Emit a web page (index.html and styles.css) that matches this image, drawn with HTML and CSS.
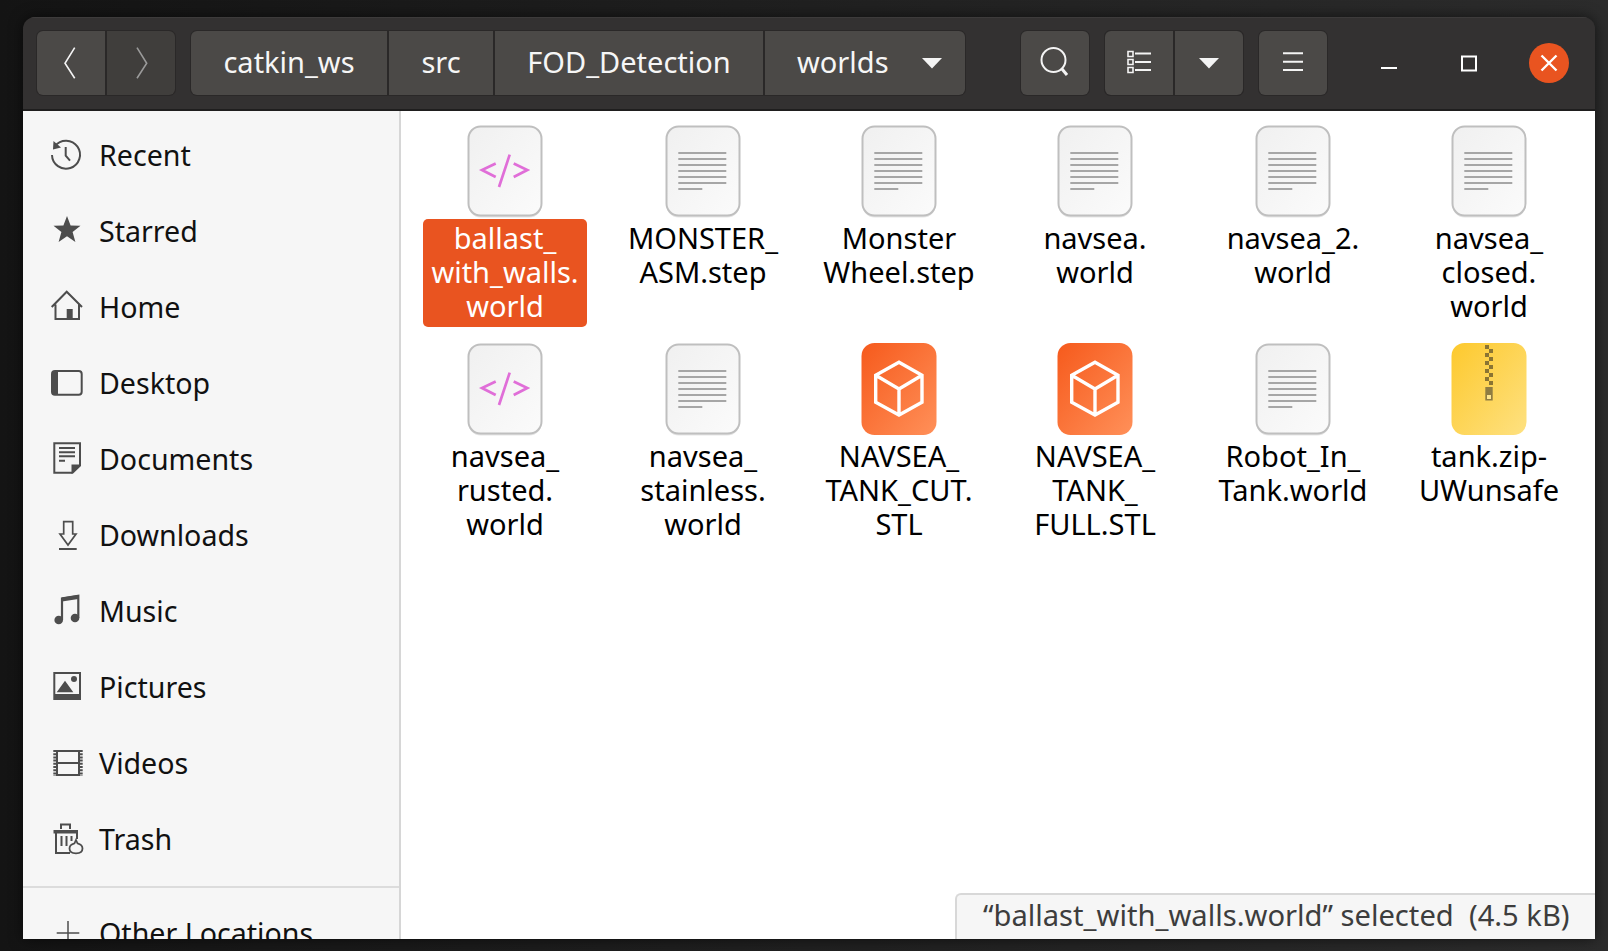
FILE: index.html
```html
<!DOCTYPE html>
<html lang="en">
<head>
<meta charset="utf-8">
<title>worlds</title>
<link rel="stylesheet" href="styles.css">
</head>
<body>
<svg class="defs" width="0" height="0" aria-hidden="true">
  <defs>
    <linearGradient id="paper" x1="0" y1="0" x2="1" y2="1"><stop offset="0" stop-color="#f0f0f0"/><stop offset="1" stop-color="#fbfbfb"/></linearGradient>
    <linearGradient id="orange" x1="0" y1="0" x2="1" y2="1"><stop offset="0" stop-color="#f65a1c"/><stop offset="1" stop-color="#ff9059"/></linearGradient>
    <linearGradient id="yellow" x1="0" y1="0" x2="1" y2="1"><stop offset="0" stop-color="#fdc92d"/><stop offset="1" stop-color="#fee181"/></linearGradient>
    <symbol id="sheet" viewBox="0 0 76 94">
      <rect x="1.5" y="2.5" width="73" height="90" rx="12" fill="#000" opacity=".1"/>
      <rect x="1.5" y="1.5" width="73" height="89" rx="12" fill="url(#paper)" stroke="#bfbfbf" stroke-width="2"/>
    </symbol>
    <symbol id="doc" viewBox="0 0 76 94">
      <use href="#sheet" width="76" height="94"/>
      <path d="M13.3 28H61.3M13.3 34H61.3M13.3 40H61.3M13.3 46H61.3M13.3 52H61.3M13.3 58H61.3M13.3 64H37.3" stroke="#a6a6a6" stroke-width="2" fill="none"/>
    </symbol>
    <symbol id="code" viewBox="0 0 76 94">
      <use href="#sheet" width="76" height="94"/>
      <path d="M28.7 38.5L15 45L28.7 52M42.7 29.7L32 62M46.7 38.500L60.300 45L46.7 52" stroke="#e06ed8" stroke-width="2.7" fill="none"/>
    </symbol>
    <symbol id="cube" viewBox="0 0 76 94">
      <rect x="0.5" y="0" width="75" height="92" rx="13" fill="url(#orange)"/>
      <path d="M38 19.3L61 32.3V59.3L38 72L14.7 59.3V32.3ZM14.7 32.3L38 46L61 32.3M38 46V72" stroke="#fff" stroke-width="3.4" fill="none"/>
    </symbol>
  </defs>
</svg>
<div class="window">
  <header class="header">
    <div class="nav group">
      <button class="btn nav-btn"><svg class="hicon" viewBox="0 0 68 64"><path d="M37.7 16.7L28 32.3L37.7 47.3" stroke="#f4f4f4" stroke-width="1.6" fill="none"/></svg></button>
      <button class="btn nav-btn off"><svg class="hicon" viewBox="0 0 68 64"><path d="M30 16.7L39.7 32.3L30 47.3" stroke="#9a9a9a" stroke-width="1.6" fill="none"/></svg></button>
    </div>
    <div class="path group">
      <button class="btn crumb c1">catkin_ws</button>
      <button class="btn crumb c2">src</button>
      <button class="btn crumb c3">FOD_Detection</button>
      <button class="btn crumb c4"><span>worlds</span><svg class="arrow" viewBox="0 0 20 11"><path d="M0 0H20L10 10.5Z" fill="#f4f4f4"/></svg></button>
    </div>
    <button class="btn tool search"><svg class="hicon" viewBox="0 0 68 64"><circle cx="32.5" cy="29" r="12" stroke="#f4f4f4" stroke-width="2" fill="none"/><path d="M41 38L46 44" stroke="#f4f4f4" stroke-width="3"/></svg></button>
    <div class="group views">
      <button class="btn tool"><svg class="hicon" viewBox="0 0 68 64"><path d="M23 20.5h5v5h-5zM23 28.5h5v5h-5zM23 36.5h5v5h-5z" stroke="#f4f4f4" stroke-width="1.6" fill="none"/><path d="M30 22.5H46M30 31H46M30 39H46" stroke="#f4f4f4" stroke-width="2"/></svg></button>
      <button class="btn tool"><svg class="arrow" viewBox="0 0 20 11"><path d="M0 0H20L10 10.5Z" fill="#f4f4f4"/></svg></button>
    </div>
    <button class="btn tool"><svg class="hicon" viewBox="0 0 68 64"><path d="M24 22.3H44M24 30.7H44M24 39H44" stroke="#f4f4f4" stroke-width="2"/></svg></button>
    <div class="wm">
      <div class="wm-btn"><svg class="wm-icon" viewBox="0 0 40 40"><path d="M12 25H28" stroke="#fff" stroke-width="2"/></svg></div>
      <div class="wm-btn"><svg class="wm-icon" viewBox="0 0 40 40"><rect x="13" y="13.5" width="14" height="14" stroke="#fff" stroke-width="2" fill="none"/></svg></div>
      <div class="wm-btn close"><svg class="wm-icon" viewBox="0 0 40 40"><path d="M12.5 12.5L27.5 27.5M27.5 12.5L12.5 27.5" stroke="#fff" stroke-width="2.4"/></svg></div>
    </div>
  </header>
  <div class="body">
    <nav class="sidebar">
      <div class="row"><svg class="sicon" viewBox="0 0 32 32"><path d="M5 7A14 14 0 1 1 2 16" stroke="#4d4d4d" stroke-width="2" fill="none"/><path d="M3.5 2L11 8.5L3 10.5Z" fill="#4d4d4d"/><path d="M15.7 8V16.7L20 21.7" stroke="#4d4d4d" stroke-width="2" fill="none"/></svg>Recent</div>
      <div class="row"><svg class="sicon" viewBox="0 0 32 32"><path d="M17 1L20.6 10.5L30.5 10.8L22.6 17L25.4 27L17 21.2L8.6 27L11.4 17L3.5 10.8L13.4 10.5Z" fill="#4d4d4d"/></svg>Starred</div>
      <div class="row"><svg class="sicon" viewBox="0 0 32 32"><path d="M1.7 16L16.7 .7L32 16M5.5 13.5V28H29V13.5" stroke="#4d4d4d" stroke-width="2" fill="none"/><path d="M16.7 18H22.7V28H16.7Z" fill="#4d4d4d"/></svg>Home</div>
      <div class="row"><svg class="sicon" viewBox="0 0 32 32"><rect x="2" y="4" width="29.7" height="23.7" rx="3" stroke="#4d4d4d" stroke-width="2" fill="none"/><path d="M4 4H8V28H4Q2 28 2 25V7Q2 4 4 4Z" fill="#4d4d4d"/></svg>Desktop</div>
      <div class="row"><svg class="sicon" viewBox="0 0 32 32"><path d="M4.3 .3H30V22.5L22.5 29.7H4.3Z" stroke="#4d4d4d" stroke-width="2" fill="none"/><path d="M31 21.5H21.5V31Z" fill="#4d4d4d"/><path d="M9 5H25M9 9.3H25M9 13.3H25M9 17.7H15" stroke="#4d4d4d" stroke-width="2"/></svg>Documents</div>
      <div class="row"><svg class="sicon" viewBox="0 0 32 32"><path d="M13.7 2.7H22.7V15H26L18 26L10 15H13.7Z" stroke="#4d4d4d" stroke-width="1.7" fill="none"/><path d="M9 30H26.7" stroke="#4d4d4d" stroke-width="2"/></svg>Downloads</div>
      <div class="row"><svg class="sicon" viewBox="0 0 32 32"><circle cx="8.7" cy="25" r="4.3" fill="#4d4d4d"/><circle cx="25" cy="23" r="4.3" fill="#4d4d4d"/><path d="M12 25V3.5L28.3 .8V23" stroke="#4d4d4d" stroke-width="2.2" fill="none"/><path d="M12 2.5L28.3 0V4L12 6.5Z" fill="#4d4d4d"/></svg>Music</div>
      <div class="row"><svg class="sicon" viewBox="0 0 32 32"><path d="M4.3 2H30V28H4.3Z" stroke="#4d4d4d" stroke-width="2" fill="none"/><path d="M4 23H30V29H4ZM6.7 21.3L15 9.7L23.3 21.3Z" fill="#4d4d4d"/><circle cx="24" cy="8" r="3" fill="#4d4d4d"/></svg>Pictures</div>
      <div class="row"><svg class="sicon" viewBox="0 0 32 32"><path d="M7 4H29V28H7ZM7 16H29" stroke="#4d4d4d" stroke-width="2" fill="none"/><path d="M5 3V29M31 3V29" stroke="#4d4d4d" stroke-width="3.4" stroke-dasharray="2 1.2" fill="none"/></svg>Videos</div>
      <div class="row"><svg class="sicon" viewBox="0 0 32 32"><path d="M3.5 7H28V10.5H3.5Z" fill="#4d4d4d"/><path d="M11 6V1.5H20V6" stroke="#4d4d4d" stroke-width="2" fill="none"/><path d="M6 10V30H20M27 10V16" stroke="#4d4d4d" stroke-width="2" fill="none"/><path d="M11.5 13V23M16.5 13V23M21.5 13V18" stroke="#4d4d4d" stroke-width="2"/><path d="M26 17L27.500 20.300C30.500 21 32.500 23 32.500 25.500C32.500 28.500 30 30.300 26 30.300C22 30.300 19.500 28.500 19.500 25.500C19.500 23 21.500 21 24.500 20.300Z" stroke="#4d4d4d" stroke-width="1.800" fill="#f6f6f6"/></svg>Trash</div>
      <div class="sep"></div>
      <div class="row"><svg class="sicon" viewBox="0 0 32 32"><path d="M18 4V28M6.700 16H29.300" stroke="#4d4d4d" stroke-width="1.500"/></svg>Other Locations</div>
    </nav>
    <main class="main">
      <div class="grid">
        <div class="item"><svg class="ficon"><use href="#code"/></svg><div class="label selected">ballast_<br>with_walls.<br>world</div></div>
        <div class="item"><svg class="ficon"><use href="#doc"/></svg><div class="label">MONSTER_<br>ASM.step</div></div>
        <div class="item"><svg class="ficon"><use href="#doc"/></svg><div class="label">Monster<br>Wheel.step</div></div>
        <div class="item"><svg class="ficon"><use href="#doc"/></svg><div class="label">navsea.<br>world</div></div>
        <div class="item"><svg class="ficon"><use href="#doc"/></svg><div class="label">navsea_2.<br>world</div></div>
        <div class="item"><svg class="ficon"><use href="#doc"/></svg><div class="label">navsea_<br>closed.<br>world</div></div>
        <div class="item"><svg class="ficon"><use href="#code"/></svg><div class="label">navsea_<br>rusted.<br>world</div></div>
        <div class="item"><svg class="ficon"><use href="#doc"/></svg><div class="label">navsea_<br>stainless.<br>world</div></div>
        <div class="item"><svg class="ficon"><use href="#cube"/></svg><div class="label">NAVSEA_<br>TANK_CUT.<br>STL</div></div>
        <div class="item"><svg class="ficon"><use href="#cube"/></svg><div class="label">NAVSEA_<br>TANK_<br>FULL.STL</div></div>
        <div class="item"><svg class="ficon"><use href="#doc"/></svg><div class="label">Robot_In_<br>Tank.world</div></div>
        <div class="item"><svg class="ficon" viewBox="0 0 76 94"><rect x="0.500" y="0" width="75" height="92" rx="13" fill="url(#yellow)"/><path d="M36 2V42M40 6V42" stroke="#8a7433" stroke-width="4" stroke-dasharray="4 4" fill="none"/><rect x="34.300" y="44" width="7.400" height="13.500" fill="#8f7c42"/><rect x="36" y="52" width="4" height="4" fill="#fde58f"/></svg><div class="label">tank.zip-<br>UWunsafe</div></div>
      </div>
      <div class="status">“ballast_with_walls.world” selected  (4.5 kB)</div>
    </main>
  </div>
</div>
</body>
</html>
```
FILE: styles.css
```css
* { box-sizing: border-box; }
html, body { margin: 0; height: 100%; }
body {
  width: 1608px;
  height: 951px;
  overflow: hidden;
  padding: 17px 0 0 23px;
  background: linear-gradient(90deg, #141414, #2c2c2c);
  font-family: "Noto Sans", "Open Sans", sans-serif;
  font-size: 29px;
}
.defs { position: absolute; }
.window {
  width: 1572px;
  height: 922px;
  overflow: hidden;
  border-radius: 12px 12px 0 0;
  display: flex;
  flex-direction: column;
  box-shadow: 0 0 14px rgba(0, 0, 0, .6);
}
.header {
  height: 94px;
  flex: none;
  display: flex;
  align-items: flex-start;
  padding: 13px 0 0 14px;
  background: #333131;
  border-top: 1px solid #3d3b3b;
  border-bottom: 2px solid #1f1e1e;
}
.group { display: flex; gap: 2px; background: #2a2828; border-radius: 6px; box-shadow: 0 0 0 1px #2a2828; }
.btn {
  height: 64px;
  border: 0;
  padding: 0;
  margin: 0;
  background: #4b4947;
  color: #f6f6f6;
  font: inherit;
  display: flex;
  align-items: center;
  justify-content: center;
}
.group .btn:first-child { border-radius: 6px 0 0 6px; }
.group .btn:last-child { border-radius: 0 6px 6px 0; }
.nav-btn { width: 68px; }
.off { background: #403e3c; }
.hicon { width: 68px; height: 64px; display: block; }
.path { margin-left: 16px; }
.crumb { font-size: 29px; padding-bottom: 4px; }
.c1 { width: 196px; }
.c2 { width: 104px; }
.c3 { width: 268px; }
.c4 { width: 200px; justify-content: flex-start; padding-left: 32px; }
.arrow { width: 20px; height: 11px; display: block; }
.c4 .arrow { margin: 4px 0 0 33px; }
.tool { width: 68px; border-radius: 6px; box-shadow: 0 0 0 1px #2a2828; }
.search { margin-left: 56px; }
.views { margin: 0 16px; }
.wm { display: flex; gap: 40px; margin: 12px 0 0 42px; }
.wm-btn { width: 40px; height: 40px; border-radius: 50%; }
.wm-icon { width: 40px; height: 40px; display: block; }
.close { background: #e95420; }
.body { flex: 1; min-height: 0; display: flex; }
.sidebar {
  width: 378px;
  flex: none;
  padding: 6px 0 0;
  background: #f6f6f6;
  border-right: 2px solid #d6d6d6;
  color: #111;
  font-size: 28.6px;
}
.row {
  height: 76px;
  flex: none;
  display: flex;
  align-items: center;
  gap: 17px;
  padding: 0 0 2px 27px;
  white-space: nowrap;
}
.sicon { width: 32px; height: 32px; flex: none; overflow: visible; margin-top: 2px; }
.sep { height: 2px; margin: 9px 0 7px; background: #dcdcdc; }
.main { flex: 1; position: relative; background: #fff; padding: 14px 0 0 5px; }
.grid {
  display: grid;
  grid-template-columns: 198px 198px 194px 198px 198px 194px;
  row-gap: 16px;
  align-items: start;
}
.item { display: flex; flex-direction: column; align-items: center; color: #000; }
.ficon { width: 76px; height: 94px; display: block; }
.label {
  text-align: center;
  white-space: nowrap;
  line-height: 33.75px;
  padding: 2px 0 0;
  width: 164px;
  height: 108px;
}
.selected { background: #e95420; color: #fff; border-radius: 5px; }
.status {
  position: absolute;
  right: 0;
  bottom: 0;
  width: 640px;
  height: 46px;
  padding-left: 26px;
  line-height: 41px;
  font-size: 29.15px;
  white-space: pre;
  color: #3d3d3d;
  background: #f6f6f6;
  border: 2px solid #d8d8d8;
  border-width: 2px 0 0 2px;
  border-top-left-radius: 6px;
}
```
